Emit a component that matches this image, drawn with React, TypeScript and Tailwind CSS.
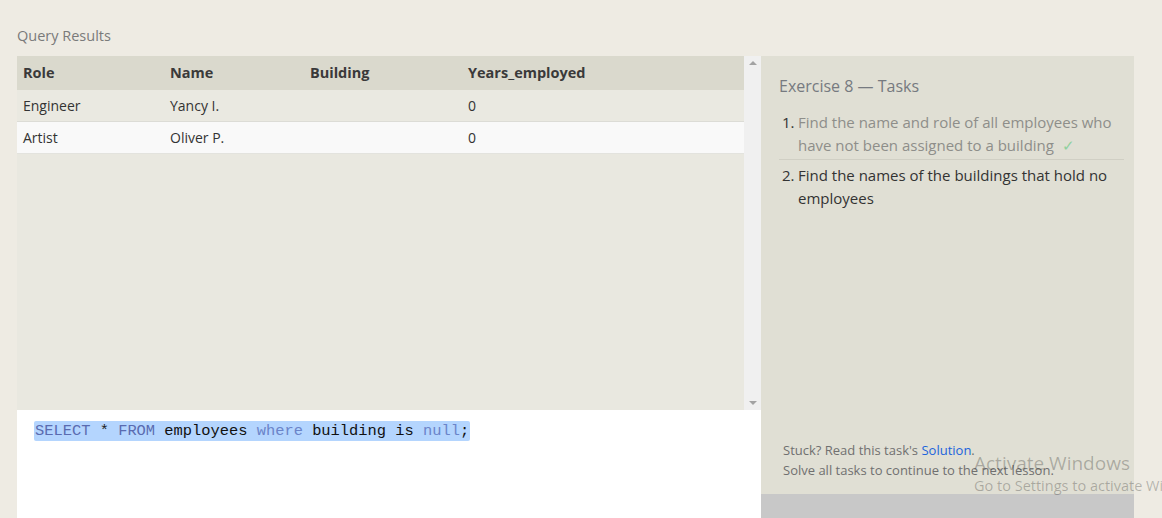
export default function App() {
  const rows = [
    { role: "Engineer", name: "Yancy I.", building: "", years: "0" },
    { role: "Artist", name: "Oliver P.", building: "", years: "0" },
  ];

  return (
    <div className="relative w-[1162px] h-[518px] overflow-hidden bg-[#eeebe3] font-['Open_Sans','Noto_Sans',sans-serif]">
      <div className="pl-[17px] pt-[26px] h-[56px] text-[14.5px] leading-[20px] text-[#7a7a7a]">Query Results</div>

      <div className="flex pl-[17px]">
        {/* left: results + editor */}
        <div className="flex flex-col w-[744px]">
          <div className="flex h-[354px]">
            <div className="flex-1 bg-[#e9e8e0]">
              <div className="flex h-[34px] items-center bg-[#dad9cd] text-[14.5px] font-bold text-[#3a3a3a]">
                <div className="w-[153px] pl-[6px]">Role</div>
                <div className="w-[140px]">Name</div>
                <div className="w-[158px]">Building</div>
                <div>Years_employed</div>
              </div>
              {rows.map((r, i) => (
                <div
                  key={i}
                  className={
                    i % 2 === 0
                      ? "flex h-[32px] items-center bg-[#eae9e1] border-b border-[#dcdcd6] text-[14px] text-[#333]"
                      : "flex h-[32px] items-center bg-[#f9f9f9] border-b border-[#e3e3de] text-[14px] text-[#333]"
                  }
                >
                  <div className="w-[153px] pl-[6px]">{r.role}</div>
                  <div className="w-[140px]">{r.name}</div>
                  <div className="w-[158px]">{r.building}</div>
                  <div>{r.years}</div>
                </div>
              ))}
            </div>
            <div className="w-[17px] bg-[#f0f0f0] flex flex-col justify-between items-center py-[5px]">
              <div className="w-0 h-0 border-x-[4px] border-x-transparent border-b-[4px] border-b-[#a3a3a3]" />
              <div className="w-0 h-0 border-x-[4px] border-x-transparent border-t-[4px] border-t-[#a3a3a3]" />
            </div>
          </div>
          <div className="h-[108px] bg-white pl-[17px] pt-[7px]">
            <span className="inline-block rounded-[2px] bg-[#b4d5fe] px-px font-['Liberation_Mono',monospace] text-[15.4px] leading-[20px]">
              <span className="text-[#5a6bb0]">SELECT</span>
              <span className="text-[#222]"> * </span>
              <span className="text-[#5a6bb0]">FROM</span>
              <span className="text-[#111]"> employees </span>
              <span className="text-[#6b84c9]">where</span>
              <span className="text-[#111]"> building is </span>
              <span className="text-[#6b84c9]">null</span>
              <span className="text-[#111]">;</span>
            </span>
          </div>
        </div>

        {/* right: tasks */}
        <div className="flex flex-col w-[373px]">
          <div className="flex flex-col h-[438px] bg-[#e0dfd4] pl-[18px] pr-[10px]">
            <div className="pt-[19px] text-[16px] leading-[22px] text-[#767a80]">Exercise 8 — Tasks</div>
            <ol className="mt-[14px] text-[15px] leading-[23px]">
              <li className="flex border-b border-[#d0cfc4] pb-[2px]">
                <span className="w-[19px] pl-[3px] text-[#333]">1.</span>
                <span className="flex-1 text-[#8e8e8a]">
                  Find the name and role of all employees who have not been assigned to a building
                  <span className="ml-[8px] text-[#8fd19e]">✓</span>
                </span>
              </li>
              <li className="flex pt-[4px]">
                <span className="w-[19px] pl-[3px] text-[#333]">2.</span>
                <span className="flex-1 text-[#333]">Find the names of the buildings that hold no employees</span>
              </li>
            </ol>
            <div className="mt-auto pl-[4px] pb-[14px] text-[13px] leading-[20px] text-[#707070]">
              <div>
                Stuck? Read this task's <span className="text-[#1c64dc]">Solution</span>.
              </div>
              <div>Solve all tasks to continue to the next lesson.</div>
            </div>
          </div>
          <div className="h-[30px] bg-[#c8c8c8]" />
        </div>
      </div>

      {/* windows watermark */}
      <div className="absolute left-[974px] top-[451px] text-[#000000]/25 whitespace-nowrap">
        <div className="text-[19px] leading-[24px]">Activate Windows</div>
        <div className="text-[14.5px] leading-[22px]">Go to Settings to activate Windows.</div>
      </div>
    </div>
  );
}
